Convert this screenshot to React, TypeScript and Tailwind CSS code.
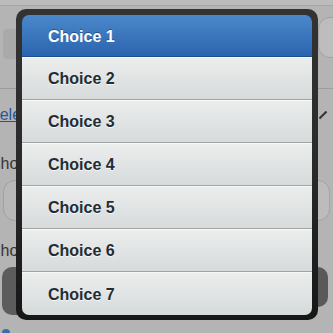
const CHOICES = ["Choice 1", "Choice 2", "Choice 3", "Choice 4", "Choice 5", "Choice 6", "Choice 7"];

function PageBehind() {
  return (
    <div className="flex h-[333px] w-[333px] flex-col overflow-hidden bg-[#b4b4b4] text-[16px] [font-family:'Liberation_Sans',Arial,sans-serif]">
      <div className="h-[6px] border-b border-[#a6a6a6] bg-[#bcbcbc]" />
      <div className="flex items-start justify-between pt-[11px]">
        <div className="mt-[12px] ml-[3px] h-[30px] w-[60px] rounded-[4px] bg-[#a9a9a9]" />
        <div className="h-[41px] w-[40px] -mr-[25px] rounded-[12px] border border-[#a3a3a3] bg-[#bdbdbd]" />
      </div>
      <div className="mt-[29px] h-px bg-[#9c9c9c]" />
      <div className="flex items-center justify-between pt-[14px]">
        <span className="-ml-[11px] text-[#24579a] underline">Select a choice</span>
        <span className="mr-[5px] block h-[2px] w-[10px] -rotate-45 bg-[#333]" />
      </div>
      <div className="mt-[25px] -ml-[11px] text-[#333]">Choose one:</div>
      <div className="mt-[4px] flex justify-between">
        <div className="ml-[3px] h-[41px] w-[80px] rounded-[12px] border border-[#a0a0a0] bg-[#b8b8b8]" />
        <div className="mr-[3px] h-[41px] w-[40px] rounded-[12px] border border-[#a3a3a3] bg-[#bcbcbc]" />
      </div>
      <div className="mt-[18px] -ml-[11px] text-[#333]">Choose one:</div>
      <div className="mt-[4px] flex justify-between">
        <div className="ml-[2px] h-[48px] w-[80px] rounded-[10px] bg-[#5c5c5c]" />
        <div className="mr-[5px] h-[40px] w-[30px] rounded-[10px] bg-[#595959]" />
      </div>
      <div className="mt-[14px] ml-[2px] h-[4px] w-[8px] rounded-t bg-[#3a6ea8]" />
    </div>
  );
}

export default function App() {
  return (
    <div className="relative h-[333px] w-[333px] overflow-hidden">
      <PageBehind />
      <div className="absolute left-[16px] top-[9px] w-[302px] rounded-[10px] bg-gradient-to-b from-[#333333] via-[#2a2a2a] to-[#171717] px-[6px] pt-[6px] pb-[5px]">
        <ul className="overflow-hidden rounded-[7px] [font-family:'Liberation_Sans',Arial,sans-serif]">
          {CHOICES.map((c, i) =>
            i === 0 ? (
              <li
                key={c}
                className="flex h-[42px] items-center border-b border-[#1d4f8f] bg-gradient-to-b from-[#4b88cb] to-[#2b64ae] pt-[2px] pl-[26px] text-[16px] font-bold text-white [text-shadow:0_-1px_0_rgba(0,0,0,0.35)]"
              >
                {c}
              </li>
            ) : (
              <li
                key={c}
                className="flex h-[43px] items-center border-t border-white/80 border-b border-b-[#a2a4a4] bg-gradient-to-b from-[#eceeee] to-[#d7dada] pt-[1px] pl-[26px] text-[16px] font-bold text-[#232c35] [text-shadow:0_1px_0_rgba(255,255,255,0.8)] last:border-b-0"
              >
                {c}
              </li>
            )
          )}
        </ul>
      </div>
    </div>
  );
}
